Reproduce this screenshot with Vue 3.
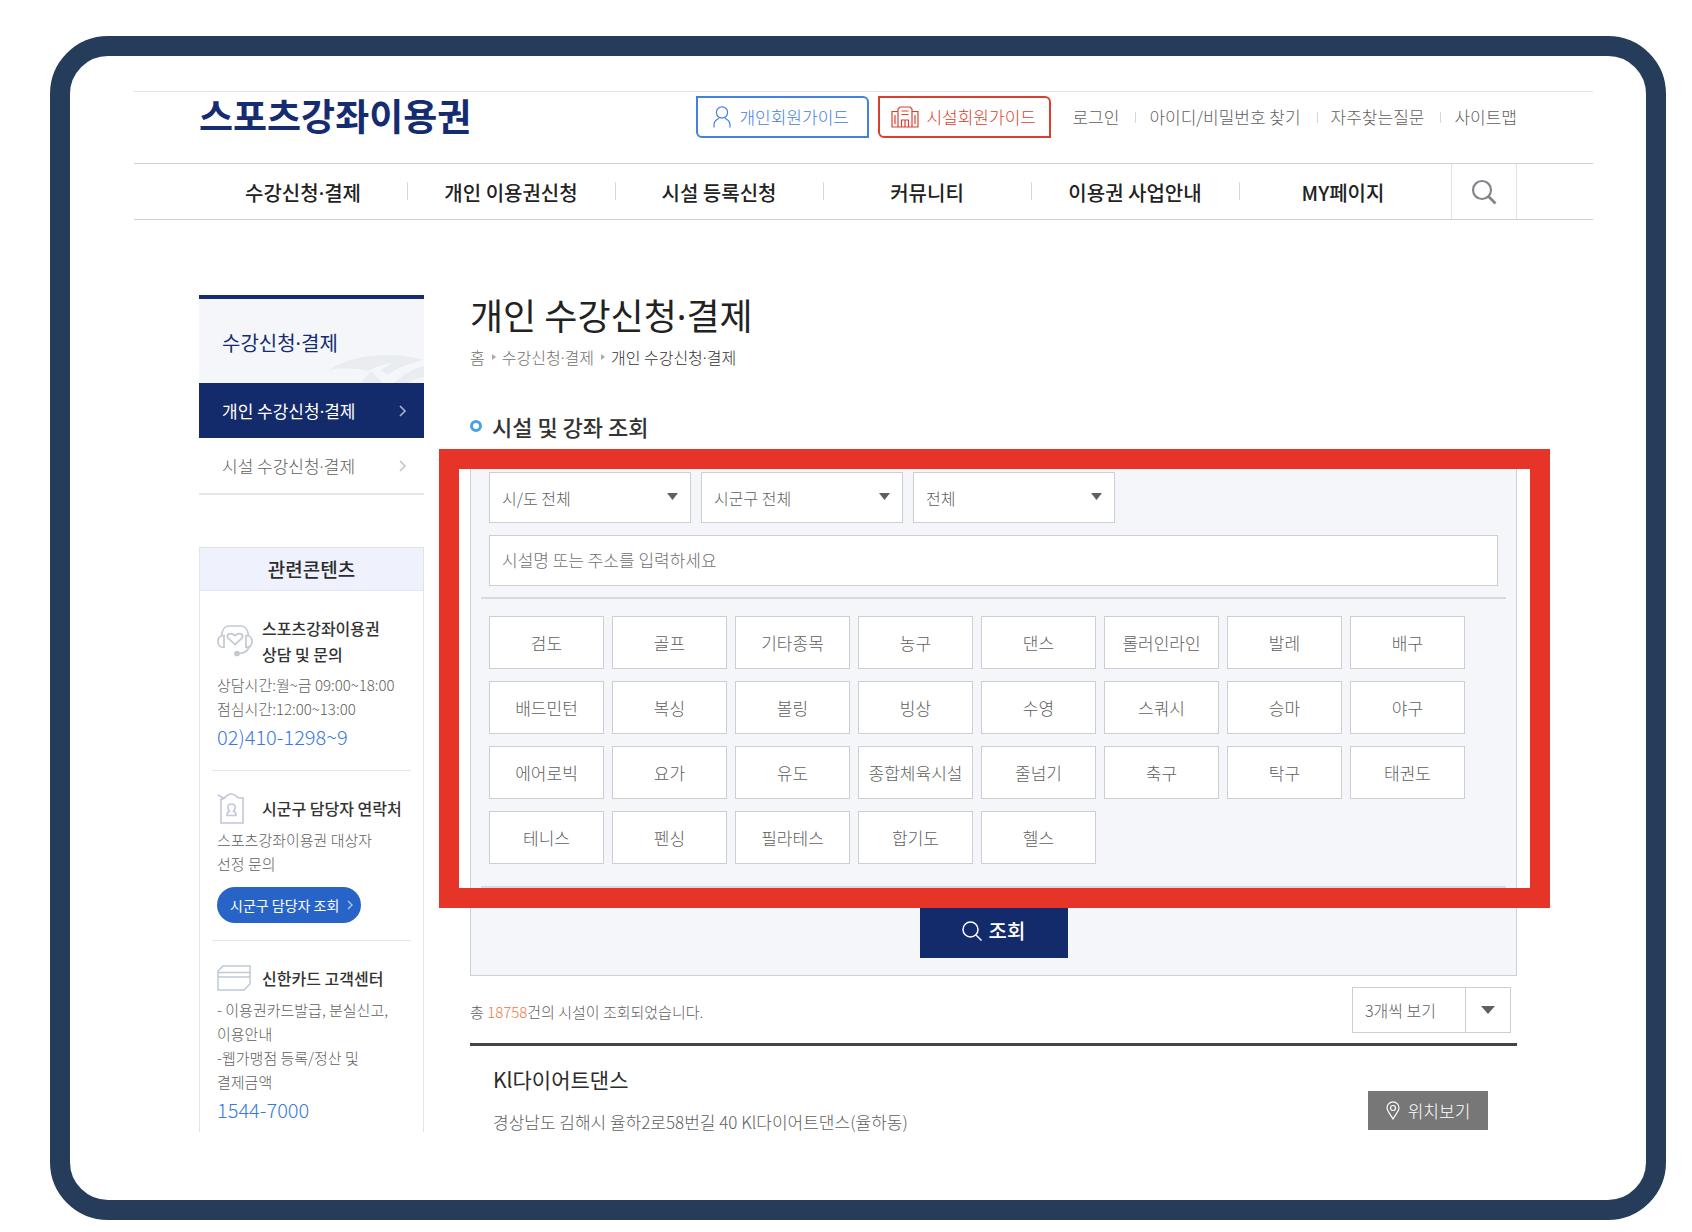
<script setup>
import { ref } from 'vue'

const menus = ['수강신청·결제', '개인 이용권신청', '시설 등록신청', '커뮤니티', '이용권 사업안내', 'MY페이지']
const links = ['로그인', '아이디/비밀번호 찾기', '자주찾는질문', '사이트맵']
const sports = [
  '검도', '골프', '기타종목', '농구', '댄스', '롤러인라인', '발레', '배구',
  '배드민턴', '복싱', '볼링', '빙상', '수영', '스쿼시', '승마', '야구',
  '에어로빅', '요가', '유도', '종합체육시설', '줄넘기', '축구', '탁구', '태권도',
  '테니스', '펜싱', '필라테스', '합기도', '헬스',
]
const filters = [
  { id: 'sido', label: '시/도', all: '시/도 전체' },
  { id: 'sigungu', label: '시군구', all: '시군구 전체' },
  { id: 'kind', label: '구분', all: '전체' },
]
const keyword = ref('')
</script>

<template>
  <div class="frame">
    <header>
      <div class="top">
        <a class="logo" href="#">스포츠강좌이용권</a>
        <div class="util">
          <a class="guide blue" href="#">
            <svg width="18" height="22" viewBox="0 0 18 22" fill="none" stroke="currentColor" stroke-width="1.2">
              <circle cx="9" cy="6.5" r="5.6" />
              <path d="M1 21.5v-3c0-3 2-4.600 5-6.200M17 21.500v-3c0-3-2-4.600-5-6.200" />
            </svg>
            개인회원가이드
          </a>
          <a class="guide red" href="#">
            <svg width="28" height="22" viewBox="0 0 28 22" fill="none" stroke="currentColor" stroke-width="1.2">
              <path d="M7 21V3l2-2h10l2 2v18M7 5.500H1V21h26V5.500h-6M10.500 5h7M10.500 8.500h7M10.500 21v-7h7v7M14 14v7M4 9v9M24 9v9" />
            </svg>
            시설회원가이드
          </a>
          <ul class="links">
            <li v-for="l in links" :key="l"><a href="#">{{ l }}</a></li>
          </ul>
        </div>
      </div>
      <nav>
        <ul>
          <li v-for="m in menus" :key="m">
            <a href="#"><template v-for="(part, i) in m.split('·')" :key="i"><span v-if="i" class="dot">·</span>{{ part }}</template></a>
          </li>
        </ul>
        <button class="find" type="button" aria-label="검색">
          <svg width="26" height="26" viewBox="0 0 26 26" fill="none" stroke="#85858c" stroke-width="2.200">
            <circle cx="11" cy="11" r="9" /><path d="M17.500 17.500l7 7" stroke-width="2.800" />
          </svg>
        </button>
      </nav>
    </header>

    <div class="body">
      <aside>
        <div class="side-head">
          <h2>수강신청<span class="dot">·</span>결제</h2>
          <svg width="96" height="28" viewBox="0 0 96 28" fill="#e9ecf0">
            <path d="M0 15C16 5 38 0 58 0c14 0 28 2 38 5-14 3-27 8-37 15l-6-5c4-3 8-5 12-7-10 1-18 4-25 8-12-3-28-3-40-1z" />
            <path d="M33 28l10-12 12 12z" />
            <path d="M66 28c8-8 18-14 30-17v11c-7 1-12 3-16 6z" />
          </svg>
        </div>
        <ul class="side-menu">
          <li class="on"><a href="#"><span>개인 수강신청<span class="dot">·</span>결제</span>
            <svg width="8" height="12" viewBox="0 0 8 12" fill="none" stroke="#a9b3d2" stroke-width="1.600"><path d="M1 1l5 5-5 5" /></svg></a></li>
          <li><a href="#"><span>시설 수강신청<span class="dot">·</span>결제</span>
            <svg width="8" height="12" viewBox="0 0 8 12" fill="none" stroke="#c4c4c8" stroke-width="1.600"><path d="M1 1l5 5-5 5" /></svg></a></li>
        </ul>

        <section class="related">
          <h3>관련콘텐츠</h3>
          <div class="card">
            <div class="card-head">
              <svg width="36" height="32" viewBox="0 0 36 32" fill="none" stroke="#c3c9d0" stroke-width="1.700">
                <path d="M4.500 11C5 5 8 1 12 1h12c4 0 7 4 7.500 10" />
                <path d="M7 10.500v12c-4 0-6-2-6-6s2-6 6-6zM29 10.500v12c4 0 6-2 6-6s-2-6-6-6z" />
                <path d="M18 19.500l-7.500-7c-1-3 3-6 7.500-2 4.500-4 8.500-1 7.500 2z" /><path d="M32 22c-1 4-4 6-10 6.500" /><circle cx="20" cy="28.500" r="2" fill="#c3c9d0" />
              </svg>
              <h4>스포츠강좌이용권<br />상담 및 문의</h4>
            </div>
            <p>상담시간:월~금 09:00~18:00<br />점심시간:12:00~13:00</p>
            <a class="tel" href="tel:02-410-1298">02)410-1298~9</a>
          </div>
          <div class="card">
            <div class="card-head">
              <svg width="28" height="32" viewBox="0 0 28 32" fill="none" stroke="#c3c6d6" stroke-width="1.600">
                <path d="M4 7v24h22V6h-4c-2 0-3-4-8-4-4 0-5 4-8 4L1 3M3 8l5-2" />
                <path d="M10 23.500c0-3 1-4 2.500-4.500-3-3-2-7 2-7s5 4 2 7c1.500.5 2.500 1.500 2.500 4.500z" />
              </svg>
              <h4>시군구 담당자 연락처</h4>
            </div>
            <p>스포츠강좌이용권 대상자<br />선정 문의</p>
            <button class="pill" type="button">시군구 담당자 조회
              <svg width="6" height="10" viewBox="0 0 6 10" fill="none" stroke="#a9c4ef" stroke-width="1.400"><path d="M1 1l4 4-4 4" /></svg>
            </button>
          </div>
          <div class="card">
            <div class="card-head">
              <svg width="34" height="26" viewBox="0 0 34 26" fill="none" stroke="#c0c9d8" stroke-width="1.500">
                <path d="M1 6l5-5h27v18l-6 6H1zM1 7.500h32M1 12h32" />
              </svg>
              <h4>신한카드 고객센터</h4>
            </div>
            <p>- 이용권카드발급, 분실신고,<br />이용안내<br />-웹가맹점 등록/정산 및<br />결제금액</p>
            <a class="tel" href="tel:1544-7000">1544-7000</a>
          </div>
        </section>
      </aside>

      <main>
        <h1>개인 수강신청<span class="dot">·</span>결제</h1>
        <ol class="crumbs">
          <li><a href="#">홈</a></li>
          <li><a href="#">수강신청<span class="dot">·</span>결제</a></li>
          <li aria-current="page"><span>개인 수강신청<span class="dot">·</span>결제</span></li>
        </ol>
        <h2 class="title">시설 및 강좌 조회</h2>

        <form class="panel" @submit.prevent>
          <div class="fields">
            <div class="selects">
              <select v-for="f in filters" :key="f.id" :aria-label="f.label">
                <option>{{ f.all }}</option>
              </select>
            </div>
            <input v-model="keyword" type="text" aria-label="시설명 또는 주소" placeholder="시설명 또는 주소를 입력하세요" />
          </div>
          <div class="sports">
            <button v-for="s in sports" :key="s" type="button">{{ s }}</button>
          </div>
          <button class="submit" type="submit">
            <svg width="20" height="20" viewBox="0 0 20 20" fill="none" stroke="#fff" stroke-width="1.500">
              <circle cx="8.500" cy="8.500" r="7.500" /><path d="M14 14l5.500 5.500" />
            </svg>
            조회
          </button>
          <div class="highlight"></div>
        </form>

        <div class="summary">
          <p>총 <em>18758</em>건의 시설이 조회되었습니다.</p>
          <select class="per" aria-label="목록 개수"><option>3개씩 보기</option></select>
        </div>

        <article>
          <div>
            <h3>Kl다이어트댄스</h3>
            <p>경상남도 김해시 율하2로58번길 40 Kl다이어트댄스(율하동)</p>
          </div>
          <button class="map" type="button">
            <svg width="14" height="19" viewBox="0 0 14 19" fill="none" stroke="#fff" stroke-width="1.200">
              <path d="M7 18C4 13 1 10 1 6.800a6 6 0 0 1 12 0C13 10 10 13 7 18z" /><circle cx="7" cy="7" r="2.500" />
            </svg>
            위치보기
          </button>
        </article>
      </main>
    </div>
  </div>
</template>

<style>
body { margin: 0; background: #fff; }
</style>

<style scoped>
*, *::before { box-sizing: border-box; }
h1, h2, h3, h4, p, ul, ol { margin: 0; padding: 0; }
ul, ol { list-style: none; }
a { color: inherit; text-decoration: none; }
button, select, input { font: inherit; color: inherit; margin: 0; border-radius: 0; }
button { cursor: pointer; }
svg { flex: none; }

.frame {
  margin: 36px 26px 12px 50px;
  border: 20px solid #263c5b;
  border-radius: 58px;
  padding: 35px 53px 64px 64px;
  font-family: "Noto Sans CJK KR", "Noto Sans", sans-serif;
  font-weight: 300;
  font-size: 16px;
  line-height: 24px;
  color: #606060;
}
/* the Korean face sets the middle dot too wide */
.dot { font-family: "Noto Sans", sans-serif; line-height: 1; }

header { border-top: 1px solid #e2e2e2; }
.top { display: flex; justify-content: space-between; height: 71px; padding: 4px 76px 0 65px; }
.logo { font-size: 37px; line-height: 38px; font-weight: 700; color: #152c70; }
.util { display: flex; align-items: center; height: 42px; font-size: 17px; }
.guide {
  display: flex; align-items: center; gap: 8px;
  height: 42px; width: 173px; padding-left: 15px;
  border: 2px solid; border-radius: 0 6px 0 6px;
}
.blue { color: #4480e0; margin-right: 9px; }
.red { color: #d9402f; padding-left: 11px; gap: 7px; }
.links { display: flex; margin-left: 21px; }
.links li { display: flex; align-items: center; }
.links li + li::before { content: ""; width: 1px; height: 11px; margin: 0 13px 0 16px; background: #d8d8d8; }

nav { display: flex; height: 57px; padding: 0 76px 0 65px; border: solid #d0d0d0; border-width: 1px 0; }
nav ul { flex: 1; display: flex; }
nav li { flex: 1; display: flex; align-items: center; justify-content: center; padding-top: 2px; font-size: 20px; font-weight: 500; color: #222; position: relative; }
nav li + li::before { content: ""; position: absolute; left: 0; top: 18px; width: 1px; height: 18px; background: #d8d8d8; }
.find { width: 66px; margin-left: 4px; padding: 0; background: none; border: solid #e2e2e2; border-width: 0 1px; display: flex; align-items: center; justify-content: center; }

.body { display: flex; gap: 46px; padding: 75px 76px 0 65px; }
aside { flex: none; width: 225px; display: flex; flex-direction: column; }
.side-head { height: 88px; display: flex; flex-direction: column; justify-content: space-between; border-top: 4px solid #152c70; background: #f4f6fa; }
.side-head h2 { padding: 32px 0 0 23px; font-size: 20px; line-height: 24px; font-weight: 400; color: #152c70; }
.side-head svg { align-self: flex-end; }
.side-menu { border-bottom: 2px solid #e6e6e6; }
.side-menu a { display: flex; align-items: center; justify-content: space-between; height: 55px; padding: 0 17px 0 23px; font-size: 17px; }
.side-menu .on { background: #132a6b; color: #fff; font-weight: 400; }

.related { margin-top: 52px; border: solid #e2e3e8; border-width: 1px 1px 0; }
.related h3 { height: 43px; line-height: 42px; background: #eff2fc; text-align: center; font-size: 19px; font-weight: 500; color: #2c2c2c; border-bottom: 1px solid #e2e6f2; }
.card { margin: 0 12px; padding: 24px 0 17px 5px; font-size: 15px; white-space: nowrap; }
.card + .card { padding-top: 21px; border-top: 1px solid #e6e6ea; }
.card:last-child { padding-bottom: 6px; }
.card-head { display: flex; align-items: center; min-height: 32px; margin-bottom: 4px; }
.card:not(.card + .card) .card-head { margin-bottom: 6px; }
.card-head svg { margin-right: 9px; }
.card + .card .card-head svg { margin-right: 17px; }
.card + .card + .card .card-head svg { margin-right: 11px; }
.card h4 { font-size: 16px; line-height: 26px; font-weight: 500; color: #333; }
.tel { display: block; font-size: 20px; line-height: 32px; color: #3a7ae0; }
.pill { display: flex; align-items: center; gap: 8px; width: 144px; height: 36px; margin-top: 11px; padding: 0 0 0 13px; border: 0; border-radius: 18px; background: #2864c8; color: #fff; font-size: 14px; font-weight: 400; }

main { flex: 1; min-width: 0; }
h1 { font-size: 36px; line-height: 38px; font-weight: 400; color: #222; }
.crumbs { display: flex; margin-top: 10px; color: #707070; }
.crumbs li { display: flex; align-items: center; }
.crumbs li + li::before { content: ""; margin: 0 6px 0 7px; border: solid transparent; border-width: 3px 0 3px 4px; border-left-color: #aaa; }
.crumbs li:last-child { color: #333; }
.title { display: flex; align-items: center; gap: 10px; margin-top: 41px; font-size: 22px; line-height: 32px; font-weight: 500; color: #333; }
.title::before { content: ""; width: 12px; height: 12px; border: 3px solid #4aa3df; border-radius: 50%; }

.panel { position: relative; margin-top: 18px; padding: 11px 10px 17px; border: 1px solid #cdd0d6; background: #f5f6fa; }
.fields { padding: 0 8px 11px; border-bottom: 2px solid #d9dae0; }
.selects { display: flex; gap: 10px; margin-bottom: 12px; }
select { appearance: none; color: #606060; border: 1px solid #ccced2; background: #fff; }
.selects select {
  width: 202px; height: 51px; padding: 0 12px;
  background: #fff url("data:image/svg+xml,%3Csvg xmlns='http://www.w3.org/2000/svg' width='11' height='7'%3E%3Cpath d='M0 0h11L5.500 7z' fill='%23606060'/%3E%3C/svg%3E") no-repeat right 12px top 20px;
}
.fields input { display: block; width: 100%; height: 51px; padding: 0 12px 2px; border: 1px solid #ccced2; background: #fff; font-size: 17px; }
.fields input::placeholder { color: #707070; opacity: 1; }
.sports { display: grid; grid-template-columns: repeat(8, 1fr); gap: 12px 8px; padding: 17px 41px 22px 8px; border-bottom: 2px solid #d9dae0; }
.sports button { height: 53px; padding: 0; border: 1px solid #ccced2; background: #fff; font-size: 17px; white-space: nowrap; }
.submit { display: flex; align-items: center; justify-content: center; gap: 7px; width: 148px; height: 54px; margin: 16px auto 0; padding: 0; border: 0; background: #132a6b; color: #fff; font-size: 20px; font-weight: 500; }
.highlight { position: absolute; inset: -12px -34px 67px -32px; border: 20px solid #e73428; pointer-events: none; }

.summary { display: flex; justify-content: space-between; align-items: center; height: 70px; padding-right: 6px; border-bottom: 3px solid #444; font-size: 15px; }
.summary p { padding-top: 5px; }
.summary em { font-style: normal; color: #f07840; }
.per {
  width: 159px; height: 46px; padding: 0 12px; font-size: 16px;
  background: #fff url("data:image/svg+xml,%3Csvg xmlns='http://www.w3.org/2000/svg' width='45' height='46'%3E%3Cpath d='M.5 0v46' stroke='%23ccced2'/%3E%3Cpath d='M16 19h14l-7 8z' fill='%23606060'/%3E%3C/svg%3E") no-repeat right center;
}

article { display: flex; justify-content: space-between; align-items: flex-end; padding: 19px 29px 0 23px; }
article h3 { font-size: 21px; line-height: 28px; font-weight: 400; color: #2c2c2c; }
article p { margin-top: 15px; font-size: 17px; line-height: 28px; }
.map { display: flex; align-items: center; justify-content: center; gap: 8px; width: 120px; height: 39px; margin-bottom: 6px; padding: 0; border: 0; background: #777; color: #fff; font-size: 17px; }
</style>
